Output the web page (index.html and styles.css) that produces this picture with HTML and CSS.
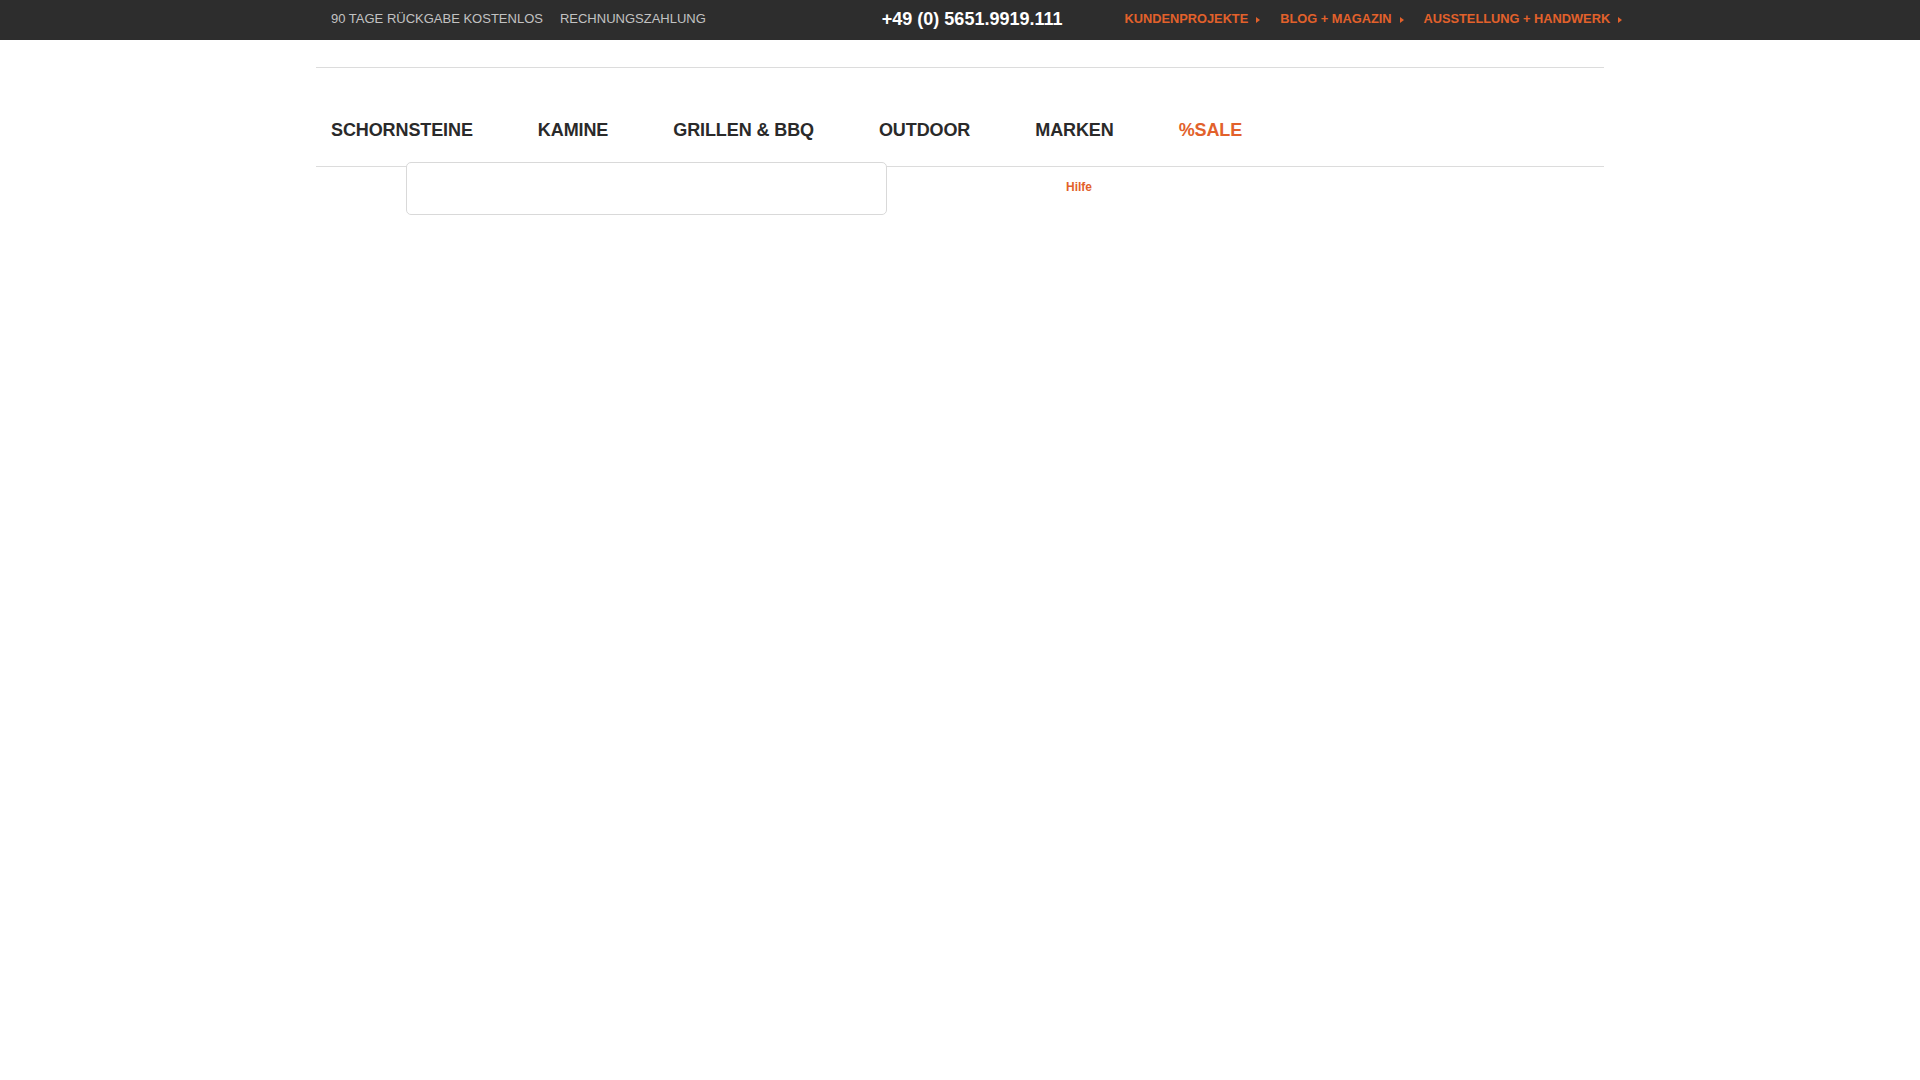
FILE: index.html
```html
<!DOCTYPE html>
<html lang="de">
<head>
<meta charset="utf-8">
<title>Shop</title>
<link rel="stylesheet" href="styles.css">
</head>
<body>
<div class="topbar">
  <div class="topbar-inner">
    <div class="usp">
      <span>90 TAGE RÜCKGABE KOSTENLOS</span>
      <span>RECHNUNGSZAHLUNG</span>
    </div>
    <div class="phone">+49 (0) 5651.9919.111</div>
    <nav class="toplinks">
      <a href="#">KUNDENPROJEKTE</a>
      <a href="#">BLOG + MAGAZIN</a>
      <a href="#">AUSSTELLUNG + HANDWERK</a>
    </nav>
  </div>
</div>
<header class="header">
  <div class="header-spacer"></div>
  <nav class="mainnav">
    <a href="#">SCHORNSTEINE</a>
    <a href="#">KAMINE</a>
    <a href="#">GRILLEN &amp; BBQ</a>
    <a href="#">OUTDOOR</a>
    <a href="#">MARKEN</a>
    <a href="#" class="sale">%SALE</a>
  </nav>
  <div class="subrow">
    <div class="searchbox"></div>
    <a href="#" class="help">Hilfe</a>
  </div>
</header>
</body>
</html>
```
FILE: styles.css
```css
* { box-sizing: border-box; }
html, body { margin: 0; padding: 0; background: #fff; }
body { font-family: "Liberation Sans", Arial, sans-serif; }
a { text-decoration: none; }

.topbar {
  background: #2d2d2d;
  height: 40px;
}
.topbar-inner {
  width: 1288px;
  margin: 0 auto;
  padding-left: 15px;
  display: flex;
  line-height: 38px;
  white-space: nowrap;
}
.usp {
  display: flex;
  gap: 17px;
  font-size: 13px;
  color: #c2c2c2;
}
.phone {
  margin-left: 176px;
  font-size: 18px;
  font-weight: bold;
  color: #fff;
}
.toplinks {
  margin-left: 62px;
  display: flex;
  gap: 20px;
}
.toplinks a {
  font-size: 12.8px;
  font-weight: bold;
  color: #e2612b;
}
.toplinks a::after {
  content: "";
  display: inline-block;
  margin-left: 8px;
  border-left: 4px solid #e2612b;
  border-top: 3.5px solid transparent;
  border-bottom: 3.5px solid transparent;
  vertical-align: 0;
}

.header {
  width: 1288px;
  margin: 0 auto;
}
.header-spacer {
  height: 28px;
  border-bottom: 1px solid #dcdcdc;
}
.mainnav {
  display: flex;
  gap: 65px;
  padding: 52px 0 0 15px;
  height: 99px;
  border-bottom: 1px solid #dcdcdc;
}
.mainnav a {
  font-size: 18px;
  line-height: 20px;
  font-weight: bold;
  letter-spacing: -0.1px;
  color: #2a2a2a;
}
.mainnav a.sale { color: #e2612b; }

.subrow {
  display: flex;
  align-items: flex-start;
}
.searchbox {
  margin: -5px 0 0 90px;
  width: 481px;
  height: 53px;
  border: 1px solid #d9d9d9;
  border-radius: 5px;
  background: #fff;
}
.help {
  margin: 13px 0 0 179px;
  font-size: 12px;
  line-height: 14px;
  font-weight: bold;
  color: #e2612b;
}
```
